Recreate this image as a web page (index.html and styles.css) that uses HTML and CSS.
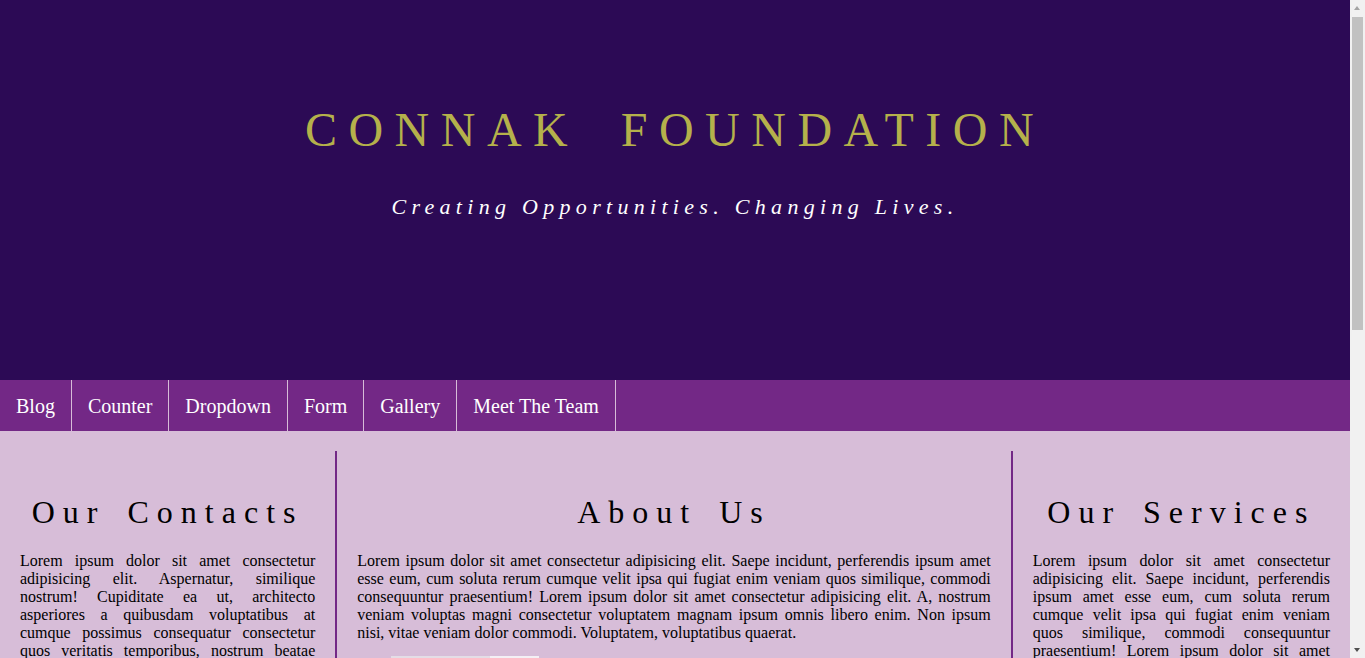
FILE: index.html
```html
<!DOCTYPE html>
<html lang="en">
<head>
<meta charset="utf-8">
<title>Connak Foundation</title>
<link rel="stylesheet" href="styles.css">
</head>
<body>
<header class="hero">
  <h1 class="hero-title">CONNAK FOUNDATION</h1>
  <p class="hero-tagline">Creating Opportunities. Changing Lives.</p>
</header>
<nav class="nav">
  <a class="nav-item" href="#">Blog</a>
  <a class="nav-item" href="#">Counter</a>
  <a class="nav-item" href="#">Dropdown</a>
  <a class="nav-item" href="#">Form</a>
  <a class="nav-item" href="#">Gallery</a>
  <a class="nav-item" href="#">Meet The Team</a>
</nav>
<main class="columns">
  <section class="col">
    <h2 class="col-title">Our Contacts</h2>
    <p class="col-text">Lorem ipsum dolor sit amet consectetur adipisicing elit. Aspernatur, similique nostrum! Cupiditate ea ut, architecto asperiores a quibusdam voluptatibus at cumque possimus consequatur consectetur quos veritatis temporibus, nostrum beatae laudantium. Lorem ipsum dolor sit amet consectetur adipisicing elit. Quidem, eveniet officiis nobis reprehenderit ad dolorum cupiditate voluptas molestiae sequi aspernatur.</p>
  </section>
  <section class="col col-divided">
    <h2 class="col-title">About Us</h2>
    <p class="col-text">Lorem ipsum dolor sit amet consectetur adipisicing elit. Saepe incidunt, perferendis ipsum amet esse eum, cum soluta rerum cumque velit ipsa qui fugiat enim veniam quos similique, commodi consequuntur praesentium! Lorem ipsum dolor sit amet consectetur adipisicing elit. A, nostrum veniam voluptas magni consectetur voluptatem magnam ipsum omnis libero enim. Non ipsum nisi, vitae veniam dolor commodi. Voluptatem, voluptatibus quaerat.</p>
    <div class="media">
      <div class="media-frame"></div>
    </div>
  </section>
  <section class="col col-divided">
    <h2 class="col-title">Our Services</h2>
    <p class="col-text">Lorem ipsum dolor sit amet consectetur adipisicing elit. Saepe incidunt, perferendis ipsum amet esse eum, cum soluta rerum cumque velit ipsa qui fugiat enim veniam quos similique, commodi consequuntur praesentium! Lorem ipsum dolor sit amet consectetur adipisicing elit. A, nostrum veniam voluptas magni consectetur voluptatem magnam ipsum omnis libero enim.</p>
  </section>
</main>
<div class="scrollbar" aria-hidden="true">
  <span class="scrollbar-arrow scrollbar-arrow-up"></span>
  <span class="scrollbar-thumb"></span>
  <span class="scrollbar-arrow scrollbar-arrow-down"></span>
</div>
</body>
</html>
```
FILE: styles.css
```css
html, body {
  margin: 0;
  padding: 0;
}

body {
  margin-right: 15px;
  font-family: "Liberation Serif", "Times New Roman", serif;
  background: #d7bdd8;
  color: #000;
}

.hero {
  box-sizing: border-box;
  height: 380px;
  padding-top: 102px;
  background: #2c0a55;
  text-align: center;
}

.hero-title {
  margin: 0;
  font-size: 48px;
  font-weight: normal;
  line-height: normal;
  letter-spacing: 11.5px;
  word-spacing: 18px;
  color: #b5b14b;
}

.hero-tagline {
  margin: 37px 0 0;
  font-size: 22px;
  font-style: italic;
  line-height: normal;
  letter-spacing: 5.3px;
  color: #ffffff;
}

.nav {
  display: flex;
  background: #732886;
}

.nav-item {
  padding: 15px 16px 13px;
  font-size: 20px;
  line-height: normal;
  color: #ffffff;
  text-decoration: none;
  border-right: 1px solid #d7bdd8;
}

.columns {
  display: grid;
  grid-template-columns: 335fr 675fr 339fr;
  padding-top: 20px;
  padding-bottom: 40px;
}

.col {
  padding: 0 20px;
  min-width: 0;
}

.col-divided {
  border-left: 2px solid #732886;
}

.col-title {
  margin: 43px 0 21px;
  font-size: 32px;
  font-weight: normal;
  line-height: normal;
  letter-spacing: 8px;
  word-spacing: 6px;
  text-align: center;
}

.col-text {
  margin: 0;
  font-size: 16px;
  line-height: normal;
  text-align: justify;
}

.media {
  margin: 14px 0 0 34px;
  width: 148px;
  height: 120px;
  background: #e4dde6;
}

.media-frame {
  margin-left: 99px;
  width: 49px;
  height: 100%;
  background: #f4f0f5;
}

/* visual stand-in for the browser's classic scrollbar */
.scrollbar {
  position: fixed;
  top: 0;
  right: 0;
  width: 15px;
  height: 100vh;
  background: #f1f1f1;
}

.scrollbar-thumb {
  position: absolute;
  top: 17px;
  left: 2px;
  width: 11px;
  height: 313px;
  background: #c1c1c1;
}

.scrollbar-arrow {
  position: absolute;
  left: 4px;
  width: 0;
  height: 0;
  border-left: 3.5px solid transparent;
  border-right: 3.5px solid transparent;
}

.scrollbar-arrow-up {
  top: 6px;
  border-bottom: 4px solid #a3a3a3;
}

.scrollbar-arrow-down {
  bottom: 6px;
  border-top: 4px solid #505050;
}
```
